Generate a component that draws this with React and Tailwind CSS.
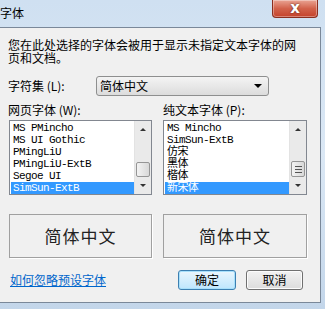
import React from 'react';

const webFonts = ['MS PMincho', 'MS UI Gothic', 'PMingLiU', 'PMingLiU-ExtB', 'Segoe UI', 'SimSun-ExtB'];
const textFonts = ['MS Mincho', 'SimSun-ExtB', '仿宋', '黑体', '楷体', '新宋体'];

const ScrollBar = ({ grip }) => (
  <div className="w-[17px] h-full bg-[#eaeaea] border-l border-[#e3e3e3] flex flex-col items-center">
    <div className="h-[17px] w-full flex items-center justify-center">
      <div className="w-0 h-0 border-l-[3px] border-r-[3px] border-b-[3px] border-l-transparent border-r-transparent border-b-[#333]" />
    </div>
    <div className="flex-1 w-full">
      <div
        className={
          'mx-[1px] rounded-[2px] border border-[#959595] bg-gradient-to-r from-[#f3f3f3] to-[#d8d8d8] flex flex-col items-center justify-center gap-[2px] ' +
          (grip ? 'mt-[23px] h-[16px]' : 'mt-[24px] h-[15px]')
        }
      >
        {grip && (
          <>
            <div className="w-[7px] h-[1px] bg-[#555]" />
            <div className="w-[7px] h-[1px] bg-[#555]" />
            <div className="w-[7px] h-[1px] bg-[#555]" />
          </>
        )}
      </div>
    </div>
    <div className="h-[17px] w-full flex items-center justify-center">
      <div className="w-0 h-0 border-l-[3px] border-r-[3px] border-t-[3px] border-l-transparent border-r-transparent border-t-[#333]" />
    </div>
  </div>
);

const ListBox = ({ items, selected, grip }) => (
  <div className="h-[75px] border border-[#828790] bg-white flex">
    <div className="flex-1 pt-[1px] pl-[1px]">
      {items.map((item) => (
        <div
          key={item}
          className={
            'h-[12px] pl-[2px] flex items-center text-[11px] leading-[12px] tracking-[-0.6px] font-["Liberation_Mono","Noto_Sans_CJK_SC",monospace] ' +
            (item === selected ? 'bg-[#3399ff] text-white' : 'text-black')
          }
        >
          {item}
        </div>
      ))}
    </div>
    <ScrollBar grip={grip} />
  </div>
);

const Preview = () => (
  <div className="h-[44px] border border-[#a0a0a0] shadow-[1px_1px_0_#ffffff] flex items-center justify-center text-[17px] tracking-[1px] text-[#222]">
    简体中文
  </div>
);

const App = () => {
  return (
    <div className="w-[325px] h-[309px] overflow-hidden flex flex-col bg-gradient-to-b from-[#cfe0f1] via-[#dbe8f5] to-[#c3d6ea] font-['Noto_Sans_CJK_SC','Noto_Sans',sans-serif] text-black">
      {/* title bar */}
      <div className="h-[27px] shrink-0 flex items-start justify-between">
        <div className="pt-[6px] text-[12px] leading-[14px]">字体</div>
        <div className="mr-[7px] w-[46px] h-[18px] rounded-b-[4px] border border-t-0 border-[#8a2e1f] bg-gradient-to-b from-[#e9a393] via-[#d2624b] to-[#c4412a] flex items-center justify-center shadow-[inset_0_0_0_1px_rgba(255,255,255,0.35)]">
          <span className="text-white text-[15px] font-bold leading-none font-['DejaVu_Sans',sans-serif] [text-shadow:0_0_2px_#4a1a10]">x</span>
        </div>
      </div>

      <div className="flex shrink-0">
        {/* dialog client area */}
        <div className="w-[321px] h-[276px] bg-[#f0f0f0] border-t border-r border-b border-[#7a8899] flex flex-col">
          <p className="pl-[8px] pt-[10px] text-[12px] leading-[13px]">
            您在此处选择的字体会被用于显示未指定文本字体的网
            <br />
            页和文档。
          </p>

          <div className="mt-[12px] flex items-center">
            <span className="pl-[8px] w-[96px] text-[12px] leading-[14px]">字符集 (L):</span>
            <div className="w-[173px] h-[20px] rounded-[3px] border border-[#8e8f8f] bg-gradient-to-b from-[#f4f4f4] to-[#dcdcdc] flex items-center justify-between pl-[3px] pr-[6px]">
              <span className="text-[12px] leading-[14px]">简体中文</span>
              <div className="w-0 h-0 border-l-[4px] border-r-[4px] border-t-[4px] border-l-transparent border-r-transparent border-t-black" />
            </div>
          </div>

          <div className="mt-[7px] pl-[9px] flex gap-[11px]">
            <div className="w-[143px] flex flex-col">
              <span className="-ml-[1px] h-[17px] text-[12px] leading-[14px]">网页字体 (W):</span>
              <ListBox items={webFonts} selected="SimSun-ExtB" />
            </div>
            <div className="w-[144px] flex flex-col">
              <span className="h-[17px] text-[12px] leading-[14px]">纯文本字体 (P):</span>
              <ListBox items={textFonts} selected="新宋体" grip />
            </div>
          </div>

          <div className="mt-[19px] pl-[9px] flex gap-[11px]">
            <div className="w-[143px]">
              <Preview />
            </div>
            <div className="w-[144px]">
              <Preview />
            </div>
          </div>

          <div className="mt-[12px] pl-[10px] flex items-center">
            <a className="text-[12px] leading-[14px] text-[#0066cc] underline w-[168px]">如何忽略预设字体</a>
            <button className="w-[58px] h-[20px] rounded-[3px] border border-[#3c7fb1] bg-gradient-to-b from-[#eaf6fd] to-[#bee6fd] shadow-[inset_0_0_0_1px_#a8e0fb] text-[12px] leading-[14px]">
              确定
            </button>
            <button className="ml-[10px] w-[57px] h-[20px] rounded-[3px] border border-[#707070] bg-gradient-to-b from-[#f2f2f2] to-[#dcdcdc] shadow-[inset_0_0_0_1px_#fcfcfc] text-[12px] leading-[14px]">
              取消
            </button>
          </div>
        </div>
      </div>
    </div>
  );
};

export default App;
